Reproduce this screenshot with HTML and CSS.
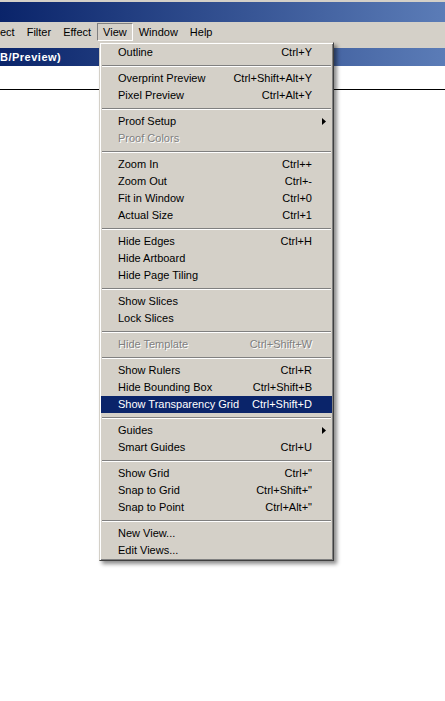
FILE: index.html
```html
<!DOCTYPE html>
<html lang="en">
<head>
  <meta charset="UTF-8" />
  <meta name="viewport" content="width=device-width, initial-scale=1" />
  <title>View menu</title>
  <link rel="stylesheet" href="styles.css">
</head>
<body>
  <div class="frame-top"></div>
  <div class="titlebar"></div>

  <div class="menubar">
    <span class="mb-item first">ect</span>
    <span class="mb-item">Filter</span>
    <span class="mb-item">Effect</span>
    <span class="mb-item open">View</span>
    <span class="mb-item">Window</span>
    <span class="mb-item">Help</span>
  </div>

  <div class="workspace">
    <div class="doc-title">B/Preview)</div>
    <div class="doc-toolbar"></div>
  </div>

  <div class="menu">
    <div class="item"><span>Outline</span><span class="key">Ctrl+Y</span></div>
    <div class="sep"></div>
    <div class="item"><span>Overprint Preview</span><span class="key">Ctrl+Shift+Alt+Y</span></div>
    <div class="item"><span>Pixel Preview</span><span class="key">Ctrl+Alt+Y</span></div>
    <div class="sep"></div>
    <div class="item"><span>Proof Setup</span><span class="key"></span>
      <svg class="arrow" width="4" height="7" viewBox="0 0 4 7"><polygon points="0,0 4,3.5 0,7" fill="#000"/></svg>
    </div>
    <div class="item disabled"><span>Proof Colors</span><span class="key"></span></div>
    <div class="sep"></div>
    <div class="item"><span>Zoom In</span><span class="key">Ctrl++</span></div>
    <div class="item"><span>Zoom Out</span><span class="key">Ctrl+-</span></div>
    <div class="item"><span>Fit in Window</span><span class="key">Ctrl+0</span></div>
    <div class="item"><span>Actual Size</span><span class="key">Ctrl+1</span></div>
    <div class="sep"></div>
    <div class="item"><span>Hide Edges</span><span class="key">Ctrl+H</span></div>
    <div class="item"><span>Hide Artboard</span><span class="key"></span></div>
    <div class="item"><span>Hide Page Tiling</span><span class="key"></span></div>
    <div class="sep"></div>
    <div class="item"><span>Show Slices</span><span class="key"></span></div>
    <div class="item"><span>Lock Slices</span><span class="key"></span></div>
    <div class="sep"></div>
    <div class="item disabled"><span>Hide Template</span><span class="key">Ctrl+Shift+W</span></div>
    <div class="sep"></div>
    <div class="item"><span>Show Rulers</span><span class="key">Ctrl+R</span></div>
    <div class="item"><span>Hide Bounding Box</span><span class="key">Ctrl+Shift+B</span></div>
    <div class="item active"><span>Show Transparency Grid</span><span class="key">Ctrl+Shift+D</span></div>
    <div class="sep"></div>
    <div class="item"><span>Guides</span><span class="key"></span>
      <svg class="arrow" width="4" height="7" viewBox="0 0 4 7"><polygon points="0,0 4,3.5 0,7" fill="#000"/></svg>
    </div>
    <div class="item"><span>Smart Guides</span><span class="key">Ctrl+U</span></div>
    <div class="sep"></div>
    <div class="item"><span>Show Grid</span><span class="key">Ctrl+"</span></div>
    <div class="item"><span>Snap to Grid</span><span class="key">Ctrl+Shift+"</span></div>
    <div class="item"><span>Snap to Point</span><span class="key">Ctrl+Alt+"</span></div>
    <div class="sep"></div>
    <div class="item"><span>New View...</span><span class="key"></span></div>
    <div class="item"><span>Edit Views...</span><span class="key"></span></div>
  </div>
</body>
</html>
```

FILE: styles.css
```css
body {
  font-family: 'Liberation Sans', Arial, sans-serif;
  font-size: 11px;
  background: #fff;
  margin: 0;
  width: 445px;
  height: 701px;
  overflow: hidden;
  position: relative;
}
.frame-top {
  height: 2px;
  background: #d4d0c8;
}
.titlebar {
  height: 20px;
  background: linear-gradient(to right, #0a246a, #5b7cb7);
}
.menubar {
  height: 20px;
  background: #d4d0c8;
  display: flex;
  align-items: flex-start;
}
.mb-item {
  margin-top: 1px;
  height: 16px;
  line-height: 16px;
  padding: 0 5px;
  border: 1px solid transparent;
  color: #000;
}
.mb-item.first {
  padding-left: 0;
  border-left: 0;
}
.mb-item.open {
  border-color: #808080 #fff #fff #808080;
}
.workspace {
  background: #d4d0c8;
  padding-top: 6px;
}
.doc-title {
  height: 18px;
  line-height: 18px;
  color: #fff;
  font-weight: bold;
  letter-spacing: 0.5px;
  background: linear-gradient(to right, #0a246a, #5b7cb7);
}
.doc-toolbar {
  height: 23px;
  background: #fff;
  border-bottom: 1px solid #000;
}

/* dropdown */
.menu {
  position: absolute;
  left: 99px;
  top: 42px;
  width: 231px;
  padding: 1px;
  background: #d4d0c8;
  border: 1px solid;
  border-color: #d4d0c8 #404040 #404040 #d4d0c8;
  box-shadow: inset 1px 1px #fff, inset -1px -1px #808080, 3px 3px 4px rgba(0,0,0,0.45);
}
.item {
  display: grid;
  grid-template-columns: 1fr auto 20px;
  align-items: center;
  height: 17px;
  line-height: 17px;
  padding-left: 17px;
  color: #000;
  white-space: nowrap;
}
.item .key {
  text-align: right;
}
.item .arrow {
  margin-left: 10px;
}
.item.active {
  background: #0a246a;
  color: #fff;
}
.item.disabled {
  color: #808080;
  text-shadow: 1px 1px 0 #fff;
}
.sep {
  height: 0;
  margin: 4px 1px 3px;
  border-top: 1px solid #808080;
  border-bottom: 1px solid #fff;
}
```
